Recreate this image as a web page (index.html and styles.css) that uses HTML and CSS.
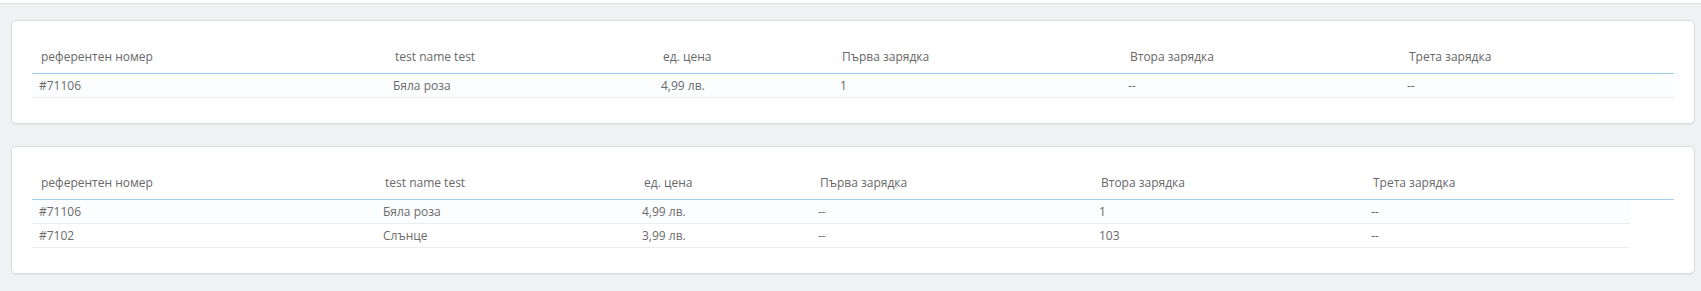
FILE: index.html
```html
<!DOCTYPE html>
<html lang="bg">
<head>
<meta charset="utf-8">
<title>Зарядки</title>
<link rel="stylesheet" href="styles.css">
</head>
<body>
<div class="topbar"></div>
<div class="content">
  <div class="panel">
    <table class="table t1">
      <colgroup>
        <col class="c1"><col class="c2"><col class="c3"><col class="c4"><col class="c5"><col class="c6">
      </colgroup>
      <thead>
        <tr>
          <th>референтен номер</th>
          <th>test name test</th>
          <th>ед. цена</th>
          <th>Първа зарядка</th>
          <th>Втора зарядка</th>
          <th>Трета зарядка</th>
        </tr>
      </thead>
      <tbody>
        <tr>
          <td>#71106</td>
          <td>Бяла роза</td>
          <td>4,99 лв.</td>
          <td>1</td>
          <td>--</td>
          <td>--</td>
        </tr>
      </tbody>
    </table>
  </div>
  <div class="panel">
    <table class="table t2">
      <colgroup>
        <col class="c1"><col class="c2"><col class="c3"><col class="c4"><col class="c5"><col class="c6"><col class="c7">
      </colgroup>
      <thead>
        <tr>
          <th>референтен номер</th>
          <th>test name test</th>
          <th>ед. цена</th>
          <th>Първа зарядка</th>
          <th>Втора зарядка</th>
          <th>Трета зарядка</th>
          <th></th>
        </tr>
      </thead>
      <tbody>
        <tr>
          <td>#71106</td>
          <td>Бяла роза</td>
          <td>4,99 лв.</td>
          <td>--</td>
          <td>1</td>
          <td>--</td>
        </tr>
        <tr>
          <td>#7102</td>
          <td>Слънце</td>
          <td>3,99 лв.</td>
          <td>--</td>
          <td>103</td>
          <td>--</td>
        </tr>
      </tbody>
    </table>
  </div>
</div>
</body>
</html>
```
FILE: styles.css
```css
html, body {
  margin: 0;
  padding: 0;
}
body {
  background: #eff1f2;
  font-family: "Open Sans", "Liberation Sans", sans-serif;
  font-size: 12px;
  color: #6a6a6a;
}
.topbar {
  height: 3px;
  background: #fff;
  border-bottom: 1px solid #dcdee0;
}
.content {
  padding: 16px 6px 0 11px;
}
.panel {
  background: #fff;
  border: 1px solid #dadde0;
  border-radius: 5px;
  box-shadow: 0 1px 0 rgba(0, 0, 0, 0.06);
  padding: 20px;
  margin-bottom: 22px;
}
.table {
  width: 100%;
  border-collapse: collapse;
  table-layout: fixed;
  margin-bottom: 5px;
}
.table th {
  text-align: left;
  font-weight: normal;
  color: #686868;
  padding: 8px 8px 8px 9px;
  line-height: 16px;
  border-bottom: 1px solid #a0d0eb;
  white-space: nowrap;
}
.table td {
  text-align: left;
  padding: 3px 8px 3px 7px;
  line-height: 17px;
  border-bottom: 1px solid #eaedef;
  white-space: nowrap;
}
.table tbody tr:nth-child(odd) td {
  background: #fcfdfe;
}
.t1 .c1 { width: 354px; }
.t1 .c2 { width: 268px; }
.t1 .c3 { width: 179px; }
.t1 .c4 { width: 288px; }
.t1 .c5 { width: 279px; }
.t1 .c6 { width: auto; }
.t2 .c1 { width: 344px; }
.t2 .c2 { width: 259px; }
.t2 .c3 { width: 176px; }
.t2 .c4 { width: 281px; }
.t2 .c5 { width: 272px; }
.t2 .c6 { width: auto; }
.t2 .c7 { width: 44px; }
```
